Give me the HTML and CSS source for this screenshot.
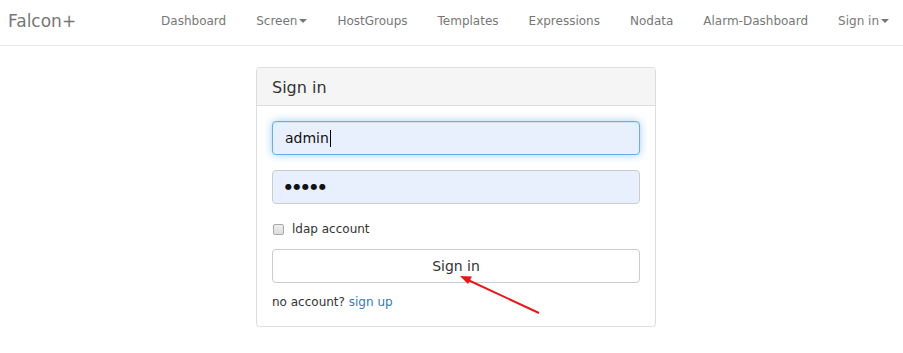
FILE: index.html
```html
<!DOCTYPE html>
<html>
<head>
<meta charset="utf-8">
<link rel="stylesheet" href="styles.css">
</head>
<body>
<nav class="navbar">
  <div class="brand">Falcon+</div>
  <ul class="nav">
    <li>Dashboard</li>
    <li>Screen<span class="caret"></span></li>
    <li>HostGroups</li>
    <li>Templates</li>
    <li>Expressions</li>
    <li>Nodata</li>
    <li>Alarm-Dashboard</li>
    <li>Sign in<span class="caret"></span></li>
  </ul>
</nav>
<main class="main">
  <section class="panel">
    <div class="panel-heading">Sign in</div>
    <div class="panel-body">
      <div class="form-group">
        <div class="input focus">admin<span class="cursor"></span></div>
      </div>
      <div class="form-group">
        <div class="input dots">&#9679;&#9679;&#9679;&#9679;&#9679;</div>
      </div>
      <label class="check"><span class="box"></span>ldap account</label>
      <div class="btn">Sign in</div>
      <p class="foot">no account? <a class="link">sign up</a></p>
    </div>
  </section>
</main>
<svg class="arrow" width="903" height="353" viewBox="0 0 903 353">
  <line x1="539" y1="313" x2="468" y2="280" stroke="#e8161b" stroke-width="2"/>
  <polygon points="460,276 472,276.5 468,284" fill="#e8161b"/>
</svg>
</body>
</html>
```
FILE: styles.css
```css
html, body {
  margin: 0;
  padding: 0;
  background: #fff;
  font-family: "DejaVu Sans", Verdana, sans-serif;
  color: #333;
}
.navbar {
  height: 45px;
  border-bottom: 1px solid #e7e7e7;
  display: flex;
  align-items: center;
  justify-content: space-between;
}
.brand {
  padding-left: 8px;
  font-size: 17px;
  color: #777;
  margin-bottom: 3px;
}
.nav {
  list-style: none;
  margin: 0 -1px 4px 0;
  padding: 0;
  display: flex;
}
.nav li {
  padding: 0 15px;
  font-size: 12px;
  color: #777;
  display: flex;
  align-items: center;
}
.caret {
  display: inline-block;
  width: 0;
  height: 0;
  margin-left: 2px;
  margin-top: 1px;
  border-top: 4px solid #777;
  border-left: 4px solid transparent;
  border-right: 4px solid transparent;
}
.main {
  padding-top: 21px;
  padding-left: 256px;
}
.panel {
  width: 398px;
  border: 1px solid #ddd;
  border-radius: 4px;
  box-shadow: 0 1px 1px rgba(0,0,0,0.05);
}
.panel-heading {
  height: 38px;
  box-sizing: border-box;
  padding: 10px 15px;
  background: #f5f5f5;
  border-bottom: 1px solid #ddd;
  border-radius: 3px 3px 0 0;
  font-size: 16px;
  line-height: 19px;
  color: #333;
}
.panel-body {
  padding: 15px 15px 14px;
}
.form-group {
  margin-bottom: 15px;
}
.input {
  height: 34px;
  box-sizing: border-box;
  border: 1px solid #ccc;
  border-radius: 4px;
  background: #e8f0fe;
  padding: 0 12px;
  font-size: 14px;
  line-height: 32px;
  color: #111;
  display: flex;
  align-items: center;
}
.input.focus {
  border-color: #66afe9;
  box-shadow: inset 0 1px 1px rgba(0,0,0,0.075), 0 0 8px rgba(102,175,233,0.6);
}
.input.dots {
  font-size: 8px;
  letter-spacing: 1.5px;
  color: #111;
}
.cursor {
  display: inline-block;
  width: 1px;
  height: 17px;
  background: #000;
  margin-left: 1px;
}
.check {
  display: flex;
  align-items: center;
  height: 20px;
  margin-top: 14px;
  font-size: 12px;
  color: #333;
}
.box {
  width: 11px;
  height: 11px;
  box-sizing: border-box;
  border: 1px solid #a9a9a9;
  border-radius: 2px;
  background: linear-gradient(#eee, #ddd);
  margin-left: 1px;
  margin-right: 8px;
}
.btn {
  margin-top: 10px;
  height: 34px;
  box-sizing: border-box;
  border: 1px solid #ccc;
  border-radius: 4px;
  background: #fff;
  text-align: center;
  font-size: 14px;
  line-height: 32px;
  color: #333;
}
.foot {
  margin: 9px 0 0;
  font-size: 12px;
  line-height: 20px;
  color: #333;
}
.link {
  color: #337ab7;
}
.arrow {
  position: absolute;
  left: 0;
  top: 0;
  pointer-events: none;
}
```
